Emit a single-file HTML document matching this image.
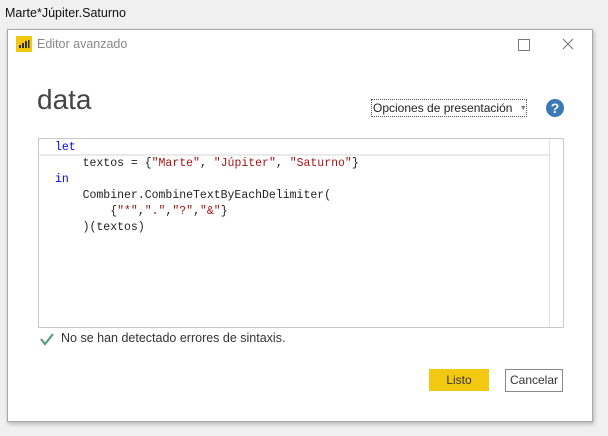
<!DOCTYPE html>
<html><head><meta charset="utf-8"><style>
body{margin:0;width:608px;height:436px;background:#f0f0f0;position:relative;overflow:hidden;font-family:"Liberation Sans",sans-serif}
.a{position:absolute}
.code{font-family:"Liberation Mono",monospace;font-size:11.5px;color:#222;white-space:pre}
.k{color:#0000ff}.s{color:#a31515}
</style></head><body>
<div class="a" style="left:5px;top:6px;font-size:12.5px;color:#111">Marte*Júpiter.Saturno</div>
<div class="a" style="left:7px;top:29px;width:584px;height:391px;background:#fff;border:1px solid #a8a8a8;box-shadow:1px 2px 4px rgba(0,0,0,.25)"></div>
<div class="a" style="left:16px;top:36px;width:16px;height:16px;background:#f2c811"></div>
<svg class="a" style="left:16px;top:36px" width="16" height="16"><rect x="3" y="9" width="2" height="3" fill="#333"/><rect x="6" y="7" width="2" height="5" fill="#333"/><rect x="9" y="5" width="2" height="7" fill="#333"/><rect x="12" y="4" width="1.5" height="8" fill="#333"/></svg>
<div class="a" style="left:37px;top:37px;font-size:12.5px;color:#888">Editor avanzado</div>
<div class="a" style="left:518px;top:39px;width:10px;height:10px;border:1px solid #777"></div>
<svg class="a" style="left:562px;top:38px" width="12" height="12"><path d="M1 1L11 11M11 1L1 11" stroke="#777" stroke-width="1.1"/></svg>
<div class="a" style="left:37px;top:84px;font-size:28px;color:#444">data</div>
<div class="a" style="left:371px;top:99px;width:156px;height:18px;border:1px dotted #555;box-sizing:border-box;font-size:12px;color:#222;line-height:16px;padding-left:1px;white-space:nowrap;overflow:hidden">Opciones de presentación <span style="font-size:7px;color:#777;margin-left:4px;vertical-align:2px">▼</span></div>
<svg class="a" style="left:545px;top:98px" width="20" height="20"><circle cx="10" cy="10" r="9" fill="#3c78b5"/><text x="10" y="15" text-anchor="middle" font-family="Liberation Sans" font-weight="bold" font-size="14" fill="#fff">?</text></svg>
<div class="a" style="left:38px;top:138px;width:524px;height:188px;border:1px solid #c8c8c8"></div>
<div class="a" style="left:39px;top:139px;width:510px;height:15px;border-bottom:2px solid #eaeaea"></div>
<div class="a" style="left:549px;top:139px;width:1px;height:188px;background:#e0e0e0"></div>
<div class="a code" style="left:55px;top:140px;line-height:16px"><span class="k">let</span>
    textos = {<span class="s">"Marte"</span>, <span class="s">"Júpiter"</span>, <span class="s">"Saturno"</span>}
<span class="k">in</span>
    Combiner.CombineTextByEachDelimiter(
        {<span class="s">"*"</span>,<span class="s">"."</span>,<span class="s">"?"</span>,<span class="s">"&amp;"</span>}
    )(textos)</div>
<svg class="a" style="left:39px;top:332px" width="16" height="14"><path d="M2 7L6 12L14 2" stroke="#5a9a7e" stroke-width="2.2" fill="none"/></svg>
<div class="a" style="left:61px;top:331px;font-size:12.5px;color:#333">No se han detectado errores de sintaxis.</div>
<div class="a" style="left:429px;top:369px;width:60px;height:22px;background:#f2c811;font-size:12px;color:#333;text-align:center;line-height:22px">Listo</div>
<div class="a" style="left:505px;top:369px;width:56px;height:21px;border:1px solid #888;font-size:12px;color:#333;text-align:center;line-height:21px">Cancelar</div>
</body></html>
